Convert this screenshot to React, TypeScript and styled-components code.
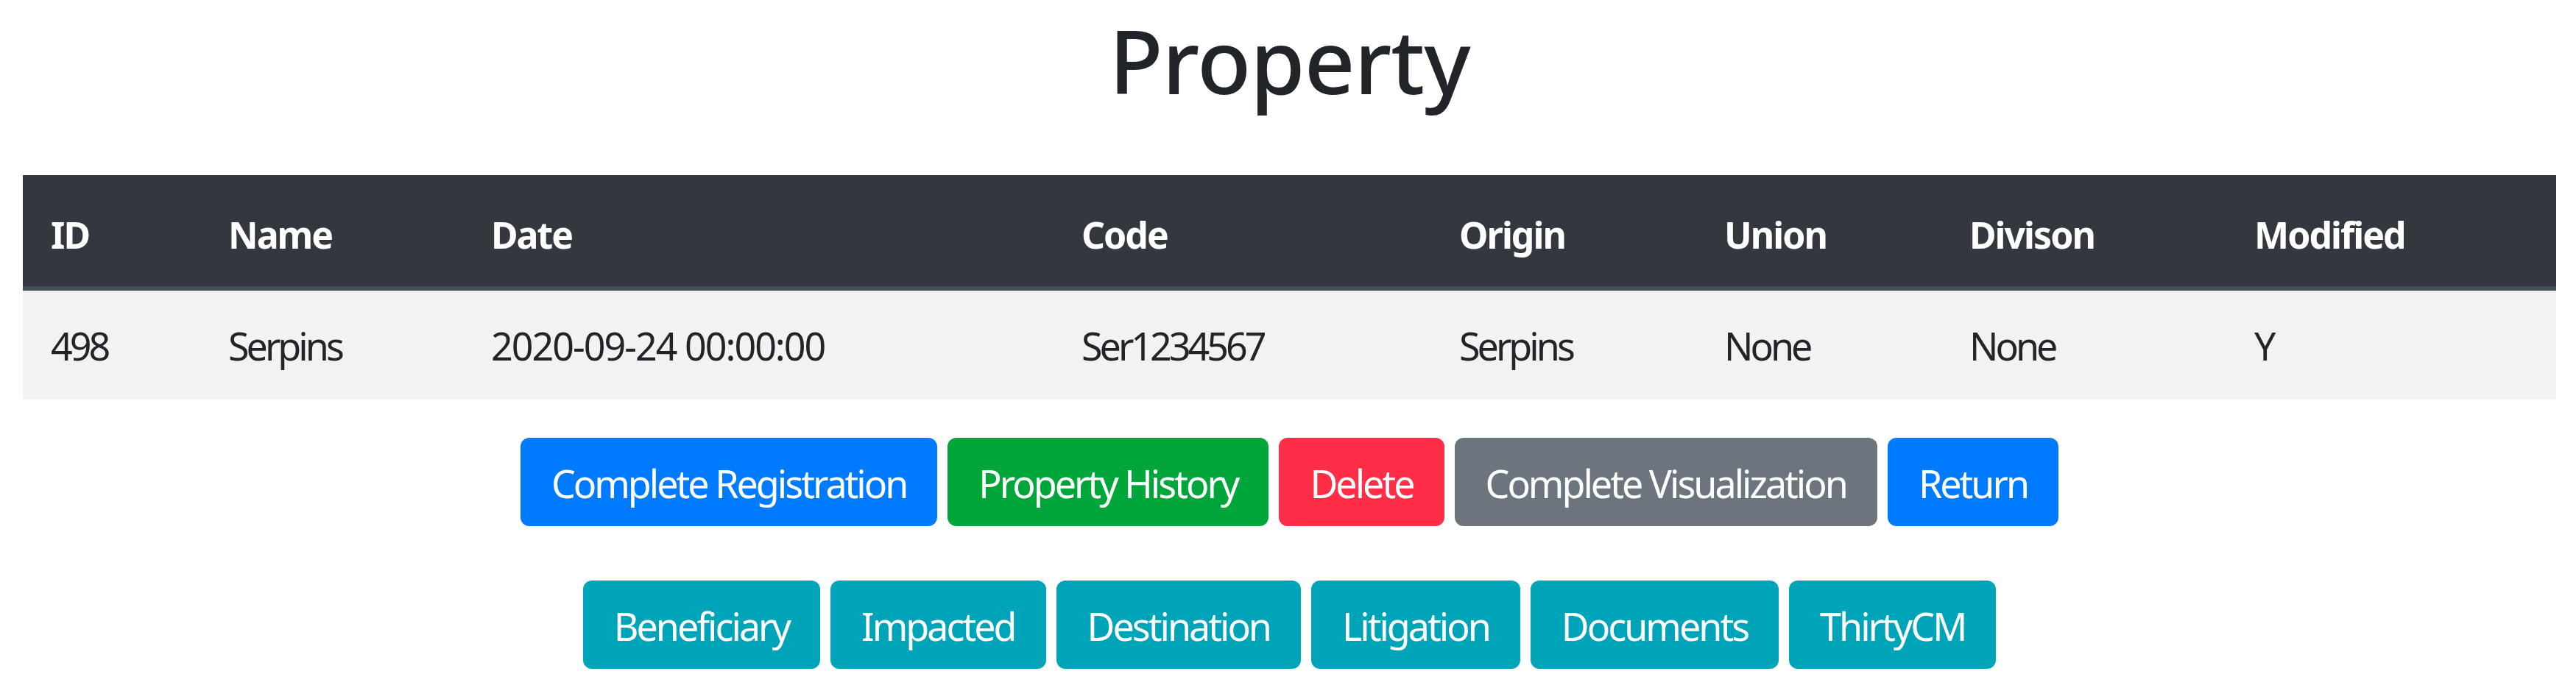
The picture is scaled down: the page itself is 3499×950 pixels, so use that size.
import styled, { createGlobalStyle } from 'styled-components';

const GlobalStyle = createGlobalStyle`
  html, body {
    margin: 0;
    padding: 0;
    background: #ffffff;
  }
  body {
    font-family: "Noto Sans", "Open Sans", "Liberation Sans", sans-serif;
    color: #212529;
  }
`;

const columns = [
    { key: 'id', label: 'ID', width: 241 },
    { key: 'name', label: 'Name', width: 357 },
    { key: 'date', label: 'Date', width: 802 },
    { key: 'code', label: 'Code', width: 513 },
    { key: 'origin', label: 'Origin', width: 360 },
    { key: 'union', label: 'Union', width: 333 },
    { key: 'division', label: 'Divison', width: 387 },
    { key: 'modified', label: 'Modified', width: 448 },
];

const row: Record<string, string> = {
    id: '498',
    name: 'Serpins',
    date: '2020-09-24 00:00:00',
    code: 'Ser1234567',
    origin: 'Serpins',
    union: 'None',
    division: 'None',
    modified: 'Y',
};

type Variant = 'primary' | 'success' | 'danger' | 'secondary' | 'info';

const variantColors: Record<Variant, string> = {
    primary: '#007bff',
    success: '#00a63a',
    danger: '#ff2d45',
    secondary: '#6c757d',
    info: '#00a4b8',
};

const actions: { label: string; variant: Variant }[] = [
    { label: 'Complete Registration', variant: 'primary' },
    { label: 'Property History', variant: 'success' },
    { label: 'Delete', variant: 'danger' },
    { label: 'Complete Visualization', variant: 'secondary' },
    { label: 'Return', variant: 'primary' },
];

const sections = ['Beneficiary', 'Impacted', 'Destination', 'Litigation', 'Documents', 'ThirtyCM'];

const App = () => {
    return (
        <>
            <GlobalStyle />
            <Page>
                <Title>Property</Title>
                <Table>
                    <colgroup>
                        {columns.map(col => (
                            <col key={col.key} style={{ width: col.width }} />
                        ))}
                    </colgroup>
                    <thead>
                        <tr>
                            {columns.map(col => (
                                <HeadCell key={col.key}>{col.label}</HeadCell>
                            ))}
                        </tr>
                    </thead>
                    <tbody>
                        <BodyRow>
                            {columns.map(col => (
                                <BodyCell key={col.key} $numeric={col.key === 'date'}>
                                    {row[col.key]}
                                </BodyCell>
                            ))}
                        </BodyRow>
                    </tbody>
                </Table>

                <ButtonRow $top={52}>
                    {actions.map(action => (
                        <Button key={action.label} $variant={action.variant}>
                            {action.label}
                        </Button>
                    ))}
                </ButtonRow>

                <ButtonRow $top={74}>
                    {sections.map(label => (
                        <Button key={label} $variant="info">
                            {label}
                        </Button>
                    ))}
                </ButtonRow>
            </Page>
        </>
    );
};

const Page = styled.div`
  width: 3499px;
  padding: 0 27px 0 31px;
  box-sizing: border-box;
`;

const Title = styled.h1`
  margin: 0;
  text-align: center;
  font-size: 120px;
  line-height: 164px;
  font-weight: 500;
  letter-spacing: -1px;
  color: #212529;
`;

const Table = styled.table`
  width: 100%;
  margin-top: 74px;
  border-collapse: collapse;
  table-layout: fixed;
`;

const HeadCell = styled.th`
  background: #32383e;
  color: #ffffff;
  text-align: left;
  font-size: 50px;
  font-weight: 700;
  line-height: 75px;
  letter-spacing: -2px;
  padding: 44px 0 32px 38px;
  border-bottom: 6px solid #454d55;
  white-space: nowrap;
`;

const BodyRow = styled.tr`
  background: #f2f2f2;
`;

const BodyCell = styled.td<{ $numeric?: boolean }>`
  font-size: 52px;
  line-height: 78px;
  letter-spacing: ${props => (props.$numeric ? '-2px' : '-4px')};
  padding: 36px 0 34px 38px;
  color: #212529;
  white-space: nowrap;
`;

const ButtonRow = styled.div<{ $top: number }>`
  display: flex;
  justify-content: center;
  gap: 14px;
  margin-top: ${props => props.$top}px;
`;

const Button = styled.button<{ $variant: Variant }>`
  font-family: "Noto Sans", "Open Sans", "Liberation Sans", sans-serif;
  font-size: 52px;
  line-height: 78px;
  letter-spacing: -3px;
  padding: 23px 42px 19px;
  border: none;
  border-radius: 12px;
  color: #ffffff;
  background: ${props => variantColors[props.$variant]};
  white-space: nowrap;
  cursor: pointer;
`;

export default App;
